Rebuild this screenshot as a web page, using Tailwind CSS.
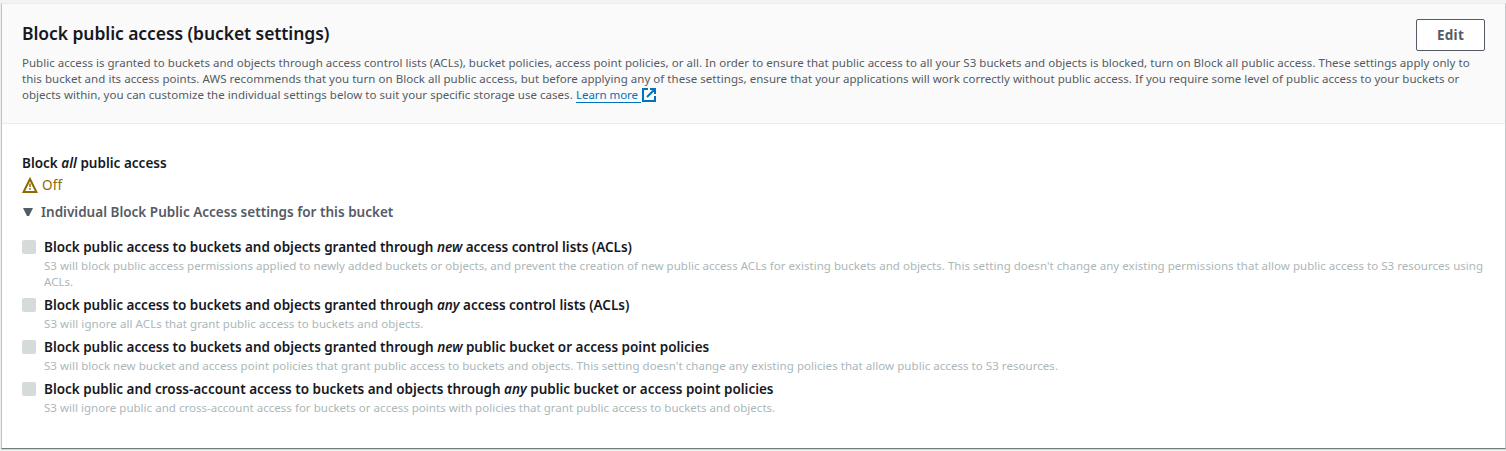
<!DOCTYPE html>
<html lang="en">
<head>
<meta charset="utf-8">
<title>Block public access</title>
<script src="https://cdn.jsdelivr.net/npm/@tailwindcss/browser@4"></script>
</head>
<body class="h-[451px] overflow-hidden bg-[#f2f3f3] pt-[3px] pl-px font-['Noto_Sans','Open_Sans',sans-serif] text-[#16191f]">
<main class="flex h-[446px] w-[1505px] flex-col border border-t-[#eaeded] border-r-[#c3c7c7] border-b-[#6f7c7e] border-l-[#bec5c6] bg-white shadow-[0_1px_1px_#d5dbdb]">
  <header class="flex h-[120px] shrink-0 justify-between border-b border-[#eaeded] bg-[#fafafa] pr-5 pl-5">
    <div class="w-0 min-w-0 flex-1 whitespace-nowrap">
      <h2 class="mt-[17px] h-6 text-[17.5px] leading-6 font-semibold tracking-[-0.08px]">Block public access (bucket settings)</h2>
      <div class="mt-[10px] text-[11.5px] leading-4 text-[#545b64]">
        <p class="tracking-[0.029px]">Public access is granted to buckets and objects through access control lists (ACLs), bucket policies, access point policies, or all. In order to ensure that public access to all your S3 buckets and objects is blocked, turn on Block all public access. These settings apply only to</p>
        <p class="tracking-[0.036px]">this bucket and its access points. AWS recommends that you turn on Block all public access, but before applying any of these settings, ensure that your applications will work correctly without public access. If you require some level of public access to your buckets or</p>
        <p class="flex h-4 tracking-[0.03px]"><span class="w-[554px]">objects within, you can customize the individual settings below to suit your specific storage use cases.</span><a class="flex h-4 text-[#0073bb]"><span class="h-4 w-[65px] border-b border-[#0073bb] tracking-[-0.06px]">Learn more</span><svg class="mt-px ml-px h-[14px] w-[14px]" viewBox="0 0 14 14" fill="none" stroke="#0073bb" stroke-width="2"><path d="M6 1H1v12h12V8M8 1h5v5M13 1L5 9"/></svg></a></p>
      </div>
    </div>
    <button class="mt-[15px] h-8 w-[69px] shrink-0 rounded-[2px] border border-[#545b64] bg-white text-[13.5px] leading-[30px] font-bold tracking-[0.25px] text-[#545b64]">Edit</button>
  </header>
  <section class="flex flex-col pl-5 text-[13.5px] whitespace-nowrap">
    <h3 class="mt-[29px] h-5 leading-5 font-semibold tracking-[0.01px]">Block <i>all</i> public access</h3>
    <div class="mt-[2px] flex h-5 items-center gap-1 leading-5 text-[#906806]"><svg class="h-4 w-4" viewBox="0 0 16 16" fill="none" stroke="#906806" stroke-width="2"><path d="M8 2L1.600 15h12.800z"/><path stroke-width="1.500" d="M8 6.500v3.500M8 11v1.700"/></svg><span class="tracking-[0.2px]">Off</span></div>
    <div class="mt-[7px] flex h-5 items-center gap-[7px] leading-5 font-semibold tracking-[0.01px] text-[#545b64]"><svg class="ml-px h-2 w-[11px]" viewBox="0 0 11 8" fill="#545b64"><path d="M0 0h10L6 8H4z"/></svg><span>Individual Block Public Access settings for this bucket</span></div>
    <ul class="mt-[15px]">
      <li class="flex h-[58px] gap-2"><span class="mt-[3px] size-[14px] rounded-[2px] bg-[#d5dbdb]"></span><div>
        <h4 class="h-5 leading-5 font-semibold tracking-[-0.018px]">Block public access to buckets and objects granted through <i>new</i> access control lists (ACLs)</h4>
        <p class="mt-px text-[11.5px] leading-4 tracking-[0.032px] text-[#aab7b8]">S3 will block public access permissions applied to newly added buckets or objects, and prevent the creation of new public access ACLs for existing buckets and objects. This setting doesn't change any existing permissions that allow public access to S3 resources using<br>ACLs.</p></div></li>
      <li class="flex h-[42px] gap-2"><span class="mt-[3px] size-[14px] rounded-[2px] bg-[#d5dbdb]"></span><div>
        <h4 class="h-5 leading-5 font-semibold tracking-[-0.018px]">Block public access to buckets and objects granted through <i>any</i> access control lists (ACLs)</h4>
        <p class="mt-px text-[11.5px] leading-4 tracking-[0.07px] text-[#aab7b8]">S3 will ignore all ACLs that grant public access to buckets and objects.</p></div></li>
      <li class="flex h-[42px] gap-2"><span class="mt-[3px] size-[14px] rounded-[2px] bg-[#d5dbdb]"></span><div>
        <h4 class="h-5 leading-5 font-semibold tracking-[-0.014px]">Block public access to buckets and objects granted through <i>new</i> public bucket or access point policies</h4>
        <p class="mt-px text-[11.5px] leading-4 tracking-[0.047px] text-[#aab7b8]">S3 will block new bucket and access point policies that grant public access to buckets and objects. This setting doesn't change any existing policies that allow public access to S3 resources.</p></div></li>
      <li class="flex h-[42px] gap-2"><span class="mt-[3px] size-[14px] rounded-[2px] bg-[#d5dbdb]"></span><div>
        <h4 class="h-5 leading-5 font-semibold tracking-[-0.012px]">Block public and cross-account access to buckets and objects through <i>any</i> public bucket or access point policies</h4>
        <p class="mt-px text-[11.5px] leading-4 tracking-[0.025px] text-[#aab7b8]">S3 will ignore public and cross-account access for buckets or access points with policies that grant public access to buckets and objects.</p></div></li>
    </ul>
  </section>
</main>
</body>
</html>
